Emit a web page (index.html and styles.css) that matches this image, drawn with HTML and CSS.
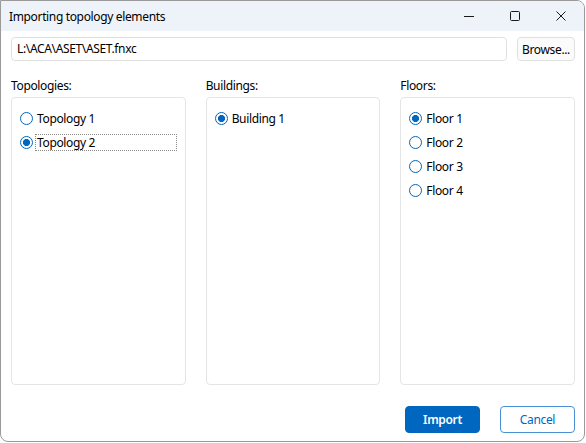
FILE: index.html
```html
<!DOCTYPE html>
<html>
<head>
    <meta charset="UTF-8">
    <title>Importing topology elements</title>
    <link rel="stylesheet" href="styles.css">
</head>
<body>
    <div class="window">
        <div class="titlebar">
            <span class="title">Importing topology elements</span>
            <div class="controls">
                <span class="ctl">
                    <svg width="10" height="10" viewBox="0 0 10 10"><path d="M0 5.5h10" stroke="#1a1a1a" stroke-width="1"/></svg>
                </span>
                <span class="ctl">
                    <svg width="10" height="10" viewBox="0 0 10 10"><rect x="0.5" y="0.5" width="9" height="9" rx="1" fill="none" stroke="#1a1a1a" stroke-width="1"/></svg>
                </span>
                <span class="ctl">
                    <svg width="10" height="10" viewBox="0 0 10 10"><path d="M0.5 0.5l9 9M9.5 0.5l-9 9" stroke="#1a1a1a" stroke-width="1"/></svg>
                </span>
            </div>
        </div>

        <div class="content">
            <div class="path-row">
                <div class="path-input">L:\ACA\ASET\ASET.fnxc</div>
                <button class="browse">Browse...</button>
            </div>

            <div class="columns">
                <div class="column">
                    <div class="col-label">Topologies:</div>
                    <div class="list">
                        <div class="item"><span class="radio"></span><span class="text">Topology 1</span></div>
                        <div class="item"><span class="radio checked"></span><span class="text focused">Topology 2</span></div>
                    </div>
                </div>
                <div class="column">
                    <div class="col-label">Buildings:</div>
                    <div class="list">
                        <div class="item"><span class="radio checked"></span><span class="text">Building 1</span></div>
                    </div>
                </div>
                <div class="column">
                    <div class="col-label">Floors:</div>
                    <div class="list">
                        <div class="item"><span class="radio checked"></span><span class="text">Floor 1</span></div>
                        <div class="item"><span class="radio"></span><span class="text">Floor 2</span></div>
                        <div class="item"><span class="radio"></span><span class="text">Floor 3</span></div>
                        <div class="item"><span class="radio"></span><span class="text">Floor 4</span></div>
                    </div>
                </div>
            </div>

            <div class="footer">
                <button class="btn primary">Import</button>
                <button class="btn secondary">Cancel</button>
            </div>
        </div>
    </div>
</body>
</html>
```

FILE: styles.css
```css
body {
    margin: 0;
    background-color: white;
    font-family: "Noto Sans", "Open Sans", sans-serif;
    font-size: 12px;
    letter-spacing: -0.35px;
    color: #000;
}
.window {
    width: 585px;
    height: 442px;
    box-sizing: border-box;
    border: 1px solid #9a9a9a;
    border-radius: 0 8px 8px 8px;
    overflow: hidden;
    display: flex;
    flex-direction: column;
    background-color: white;
}
.titlebar {
    height: 30px;
    flex-shrink: 0;
    display: flex;
    align-items: center;
    background-color: #eef3f9;
}
.title {
    padding-left: 8px;
    flex: 1;
}
.controls {
    display: flex;
    height: 100%;
}
.ctl {
    width: 46px;
    display: flex;
    align-items: center;
    justify-content: center;
}
.content {
    flex: 1;
    display: flex;
    flex-direction: column;
    padding: 6px 9px 8px 10px;
}
.path-row {
    display: flex;
    gap: 10px;
    height: 24px;
}
.path-input {
    flex: 1;
    box-sizing: border-box;
    border: 1px solid #e0e0e0;
    border-radius: 4px;
    padding: 0 5px;
    line-height: 22px;
}
.browse {
    width: 58px;
    font-family: inherit;
    font-size: 12px;
    letter-spacing: -0.35px;
    color: #000;
    background-color: #fbfbfb;
    border: 1px solid #e0e0e0;
    border-radius: 4px;
    padding: 0;
}
.columns {
    flex: 1;
    display: grid;
    grid-template-columns: 1fr 1fr 1fr;
    gap: 20px;
}
.column {
    display: flex;
    flex-direction: column;
}
.col-label {
    line-height: 16px;
    margin: 17px 0 3px 0;
}
.list {
    flex: 1;
    border: 1px solid #e5e5e5;
    border-radius: 4px;
    padding: 8px 8px 0 8px;
}
.item {
    display: flex;
    align-items: center;
    height: 24px;
}
.radio {
    width: 13px;
    height: 13px;
    box-sizing: border-box;
    border: 1px solid #0067c0;
    border-radius: 50%;
    margin-right: 2px;
    flex-shrink: 0;
}
.radio.checked {
    border: 1.5px solid #0067c0;
    background: radial-gradient(circle, #0067c0 0 3.3px, white 3.8px);
}
.text {
    line-height: 15px;
    padding: 0 1px;
    border: 1px solid transparent;
}
.text.focused {
    flex: 1;
    border: 1px dotted #8a8a8a;
}
.footer {
    display: flex;
    justify-content: flex-end;
    gap: 20px;
    margin-top: 21px;
}
.btn {
    width: 75px;
    height: 27px;
    font-family: inherit;
    font-size: 12px;
    letter-spacing: -0.35px;
    border-radius: 4px;
    padding: 0;
}
.btn.primary {
    background-color: #0067c0;
    border: 1px solid #0067c0;
    color: white;
    font-weight: 600;
}
.btn.secondary {
    background-color: white;
    border: 1px solid #4a90d4;
    color: #0067c0;
}
```
